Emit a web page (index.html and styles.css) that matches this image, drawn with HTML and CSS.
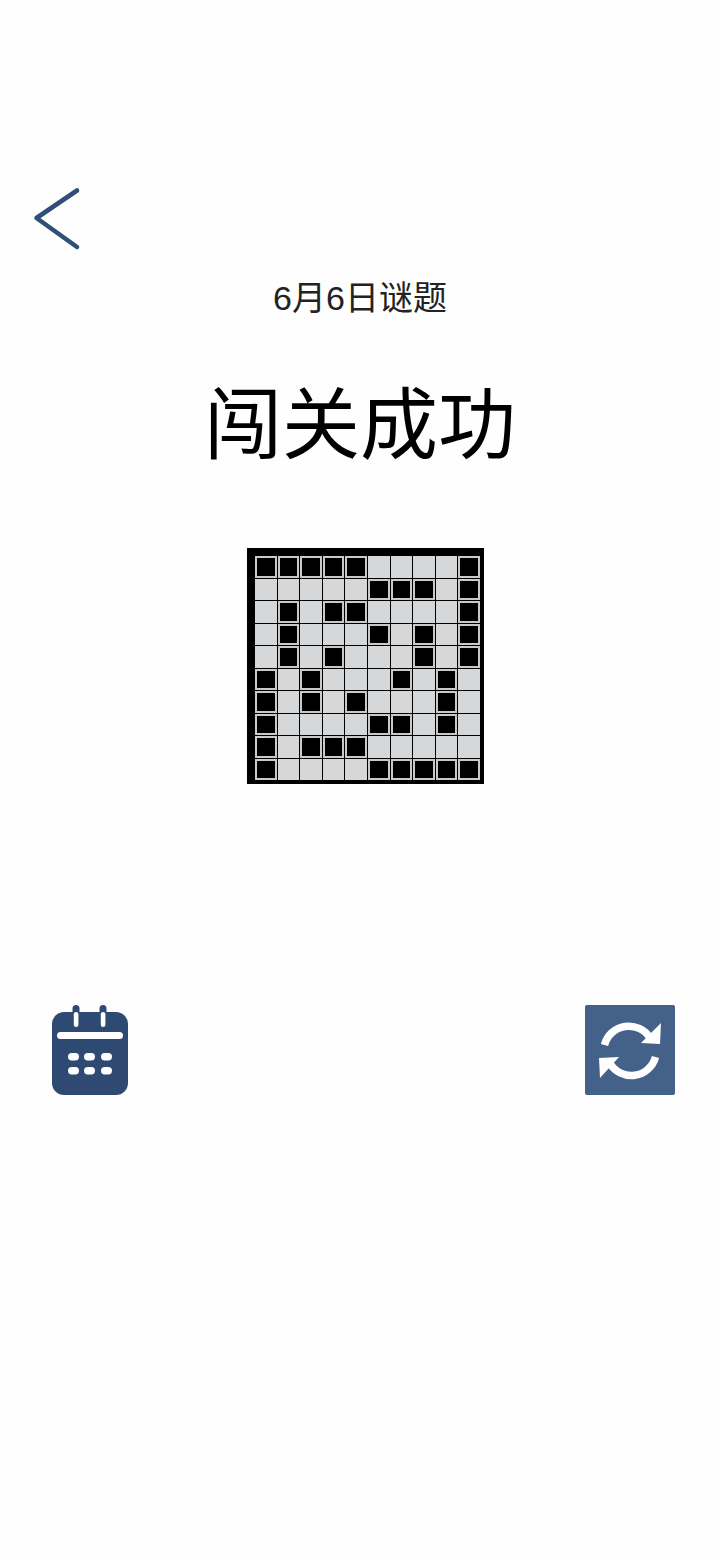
FILE: index.html
```html
<!DOCTYPE html>
<html lang="zh-CN">

<head>
    <meta charset="UTF-8">
    <meta name="viewport" content="width=device-width, initial-scale=1.0">
    <title>闯关成功</title>
    <link rel="stylesheet" href="styles.css">
</head>

<body>
    <div class="page">
        <a href="#" class="back-btn" aria-label="返回">
            <svg width="48" height="64" viewBox="0 0 48 64">
                <path d="M44 3.5 L3.5 31 L44 60" fill="none" stroke="#2f4f78" stroke-width="4.6" stroke-linecap="round" stroke-linejoin="round" />
            </svg>
        </a>

        <div class="puzzle-date">6月6日谜题</div>
        <h1 class="result-title">闯关成功</h1>

        <!-- 10 x 10 puzzle board -->
        <div class="board-wrap">
            <div class="board">
                <div class="cell on"></div><div class="cell on"></div><div class="cell on"></div><div class="cell on"></div><div class="cell on"></div><div class="cell"></div><div class="cell"></div><div class="cell"></div><div class="cell"></div><div class="cell on"></div>
                <div class="cell"></div><div class="cell"></div><div class="cell"></div><div class="cell"></div><div class="cell"></div><div class="cell on"></div><div class="cell on"></div><div class="cell on"></div><div class="cell"></div><div class="cell on"></div>
                <div class="cell"></div><div class="cell on"></div><div class="cell"></div><div class="cell on"></div><div class="cell on"></div><div class="cell"></div><div class="cell"></div><div class="cell"></div><div class="cell"></div><div class="cell on"></div>
                <div class="cell"></div><div class="cell on"></div><div class="cell"></div><div class="cell"></div><div class="cell"></div><div class="cell on"></div><div class="cell"></div><div class="cell on"></div><div class="cell"></div><div class="cell on"></div>
                <div class="cell"></div><div class="cell on"></div><div class="cell"></div><div class="cell on"></div><div class="cell"></div><div class="cell"></div><div class="cell"></div><div class="cell on"></div><div class="cell"></div><div class="cell on"></div>
                <div class="cell on"></div><div class="cell"></div><div class="cell on"></div><div class="cell"></div><div class="cell"></div><div class="cell"></div><div class="cell on"></div><div class="cell"></div><div class="cell on"></div><div class="cell"></div>
                <div class="cell on"></div><div class="cell"></div><div class="cell on"></div><div class="cell"></div><div class="cell on"></div><div class="cell"></div><div class="cell"></div><div class="cell"></div><div class="cell on"></div><div class="cell"></div>
                <div class="cell on"></div><div class="cell"></div><div class="cell"></div><div class="cell"></div><div class="cell"></div><div class="cell on"></div><div class="cell on"></div><div class="cell"></div><div class="cell on"></div><div class="cell"></div>
                <div class="cell on"></div><div class="cell"></div><div class="cell on"></div><div class="cell on"></div><div class="cell on"></div><div class="cell"></div><div class="cell"></div><div class="cell"></div><div class="cell"></div><div class="cell"></div>
                <div class="cell on"></div><div class="cell"></div><div class="cell"></div><div class="cell"></div><div class="cell"></div><div class="cell on"></div><div class="cell on"></div><div class="cell on"></div><div class="cell on"></div><div class="cell on"></div>
            </div>
        </div>

        <div class="actions">
            <a href="#" class="action-btn calendar-btn" aria-label="日历">
                <svg width="76" height="90" viewBox="0 0 76 90">
                    <rect x="0" y="7" width="76" height="83" rx="12" fill="#2f4a72" />
                    <path d="M24 3.5 V19 M51 3.5 V19" stroke="#2f4a72" stroke-width="7" stroke-linecap="round" />
                    <rect x="21.8" y="7" width="4.6" height="15" rx="2.3" fill="#fff" />
                    <rect x="48.8" y="7" width="4.6" height="15" rx="2.3" fill="#fff" />
                    <rect x="5" y="27" width="66" height="7" rx="3.5" fill="#fff" />
                    <rect x="16" y="48" width="11" height="7.5" rx="3.7" fill="#fff" />
                    <rect x="32" y="48" width="11" height="7.5" rx="3.7" fill="#fff" />
                    <rect x="49" y="48" width="11" height="7.5" rx="3.7" fill="#fff" />
                    <rect x="16" y="62" width="11" height="7.5" rx="3.7" fill="#fff" />
                    <rect x="32" y="62" width="11" height="7.5" rx="3.7" fill="#fff" />
                    <rect x="49" y="62" width="11" height="7.5" rx="3.7" fill="#fff" />
                </svg>
            </a>
            <a href="#" class="action-btn refresh-btn" aria-label="再来一次">
                <svg width="90" height="90" viewBox="0 0 90 90">
                    <rect width="90" height="90" rx="2" fill="#44618a" />
                    <path d="M19.5 40 A25 25 0 0 1 65 33" fill="none" stroke="#fff" stroke-width="7.5" />
                    <path d="M76 18 L75 39 L56 38 Z" fill="#fff" />
                    <path d="M70.5 52 A25 25 0 0 1 25 58.5" fill="none" stroke="#fff" stroke-width="7.5" />
                    <path d="M14 53 L34 52 L15 73 Z" fill="#fff" />
                </svg>
            </a>
        </div>
    </div>
</body>

</html>
```

FILE: styles.css
```css
* {
    margin: 0;
    padding: 0;
    box-sizing: border-box;
    font-family: 'Liberation Sans', 'Noto Sans CJK SC', sans-serif;
}

body {
    background-color: #fefefe;
    min-height: 100vh;
}

.page {
    padding-top: 187px;
}

.back-btn {
    display: block;
    width: 48px;
    height: 64px;
    margin-left: 33px;
}

.back-btn svg,
.action-btn svg {
    display: block;
}

.puzzle-date {
    margin-top: 25px;
    height: 44px;
    line-height: 44px;
    font-size: 34px;
    color: #222;
    text-align: center;
}

.result-title {
    margin-top: 51px;
    height: 110px;
    line-height: 110px;
    font-size: 78px;
    font-weight: 400;
    color: #000;
    text-align: center;
}

.board-wrap {
    display: flex;
    justify-content: center;
    margin-top: 67px;
    padding-left: 11px;
}

.board {
    display: grid;
    grid-template-columns: repeat(10, 1fr);
    gap: 1px;
    width: 237px;
    height: 236px;
    padding: 8px 4px 4px 8px;
    background: #000;
}

.cell {
    background: #d5d7d9;
}

.cell.on {
    background: #000;
    border: 2px solid #c9c9c9;
}

.actions {
    display: flex;
    justify-content: space-between;
    align-items: flex-end;
    margin-top: 221px;
    padding: 0 45px 0 52px;
}
```
